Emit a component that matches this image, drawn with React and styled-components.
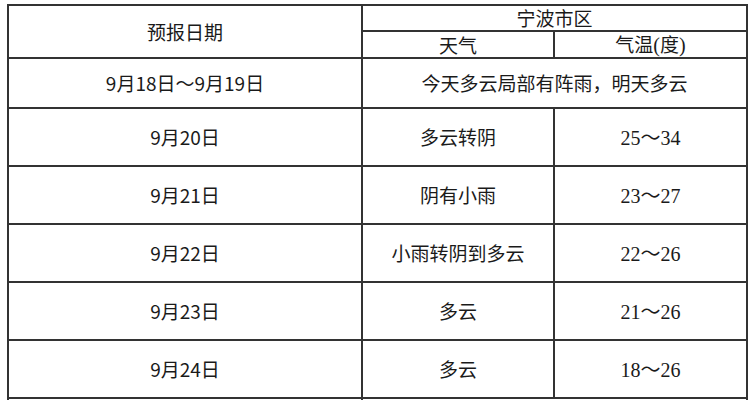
import React from 'react';
import styled, { createGlobalStyle } from 'styled-components';

const GlobalStyle = createGlobalStyle`
    body {
        margin: 0;
        background: #fff;
    }
`;

const Table = styled.table`
    margin: 4px 0 0 7px;
    width: 739px;
    border-collapse: collapse;
    table-layout: fixed;
    font-family: "Noto Sans CJK SC", "Noto Sans", sans-serif;
    font-size: 19px;
    color: #1a1a1a;
`;

const Row = styled.tr`
    height: ${({ h }) => h}px;
`;

const Cell = styled.td`
    border: 2px solid #333;
    padding: 0;
    text-align: center;
    vertical-align: middle;
    line-height: ${({ tight }) => tight ? '20px' : '24px'};
    white-space: nowrap;
    overflow: hidden;
`;

const Num = styled.span`
    font-family: "Liberation Serif", "Noto Sans CJK SC", serif;
    font-size: 20px;
`;

const forecast = [
    { date: '9月20日', weather: '多云转阴', temp: '25～34' },
    { date: '9月21日', weather: '阴有小雨', temp: '23～27' },
    { date: '9月22日', weather: '小雨转阴到多云', temp: '22～26' },
    { date: '9月23日', weather: '多云', temp: '21～26' },
    { date: '9月24日', weather: '多云', temp: '18～26' },
];

const App = () => (
    <>
        <GlobalStyle />
        <Table>
            <colgroup>
                <col style={{ width: 354 }} />
                <col style={{ width: 192 }} />
                <col style={{ width: 193 }} />
            </colgroup>
            <tbody>
            <Row h={26}>
                <Cell rowSpan={2}>预报日期</Cell>
                <Cell colSpan={2} tight>宁波市区</Cell>
            </Row>
            <Row h={27}>
                <Cell tight>天气</Cell>
                <Cell tight>气温<Num>(</Num>度<Num>)</Num></Cell>
            </Row>
            <Row h={50}>
                <Cell>9月18日～9月19日</Cell>
                <Cell colSpan={2}>今天多云局部有阵雨，明天多云</Cell>
            </Row>
            {forecast.map(({ date, weather, temp }) => (
                <Row h={58} key={date}>
                    <Cell>{date}</Cell>
                    <Cell>{weather}</Cell>
                    <Cell><Num>{temp}</Num></Cell>
                </Row>
            ))}
            <Row h={58}>
                <Cell>&nbsp;</Cell>
                <Cell colSpan={2}>&nbsp;</Cell>
            </Row>
            </tbody>
        </Table>
    </>
);

export default App;
